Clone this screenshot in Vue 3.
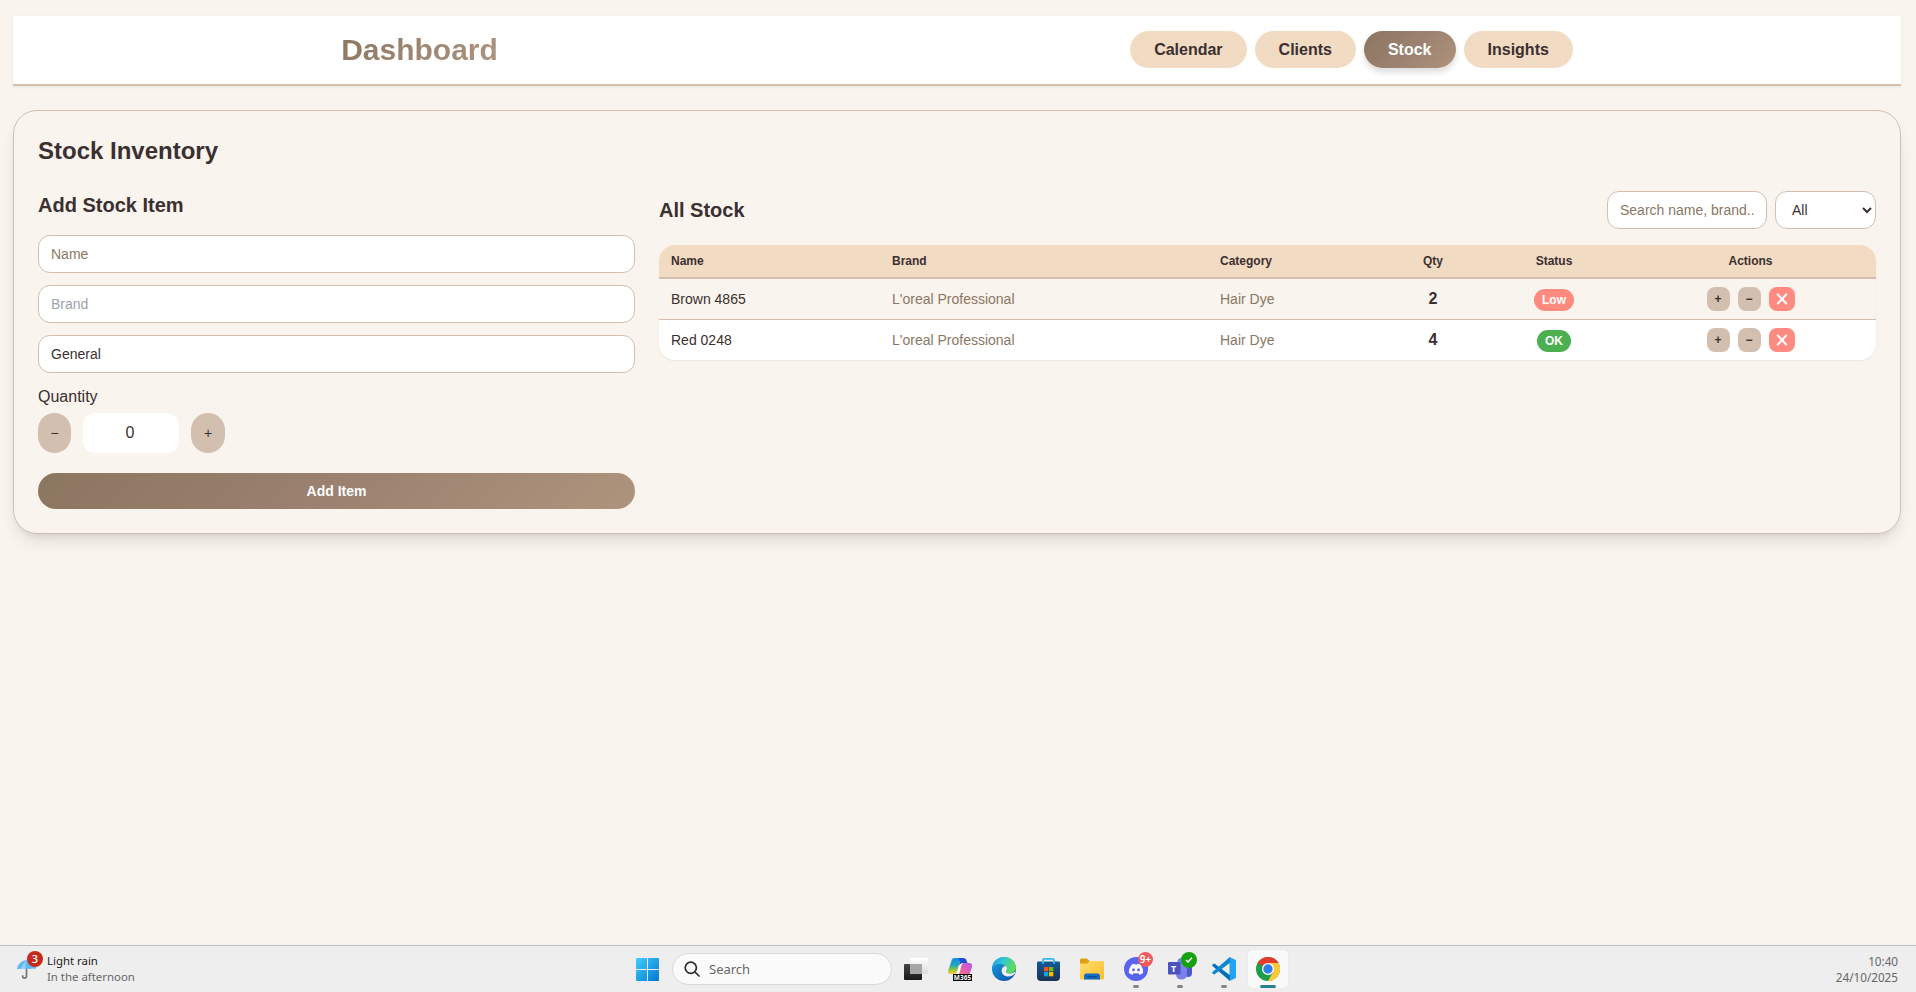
<script setup>
import { ref } from 'vue'

const tabs = ['Calendar', 'Clients', 'Stock', 'Insights']
const active = ref('Stock')
const items = ref([
  { name: 'Brown 4865', brand: "L'oreal Professional", category: 'Hair Dye', qty: 2 },
  { name: 'Red 0248', brand: "L'oreal Professional", category: 'Hair Dye', qty: 4 },
])
const category = ref('General')
const quantity = ref(0)
</script>

<template>
  <div class="screen">
    <main class="page">
      <header class="top">
        <h1>Dashboard</h1>
        <nav>
          <button v-for="t in tabs" :key="t" :class="['tab', { active: t === active }]" @click="active = t">{{ t }}</button>
        </nav>
      </header>

      <section class="panel">
        <h2>Stock Inventory</h2>
        <div class="columns">
          <form class="add" @submit.prevent>
            <h3>Add Stock Item</h3>
            <input class="field" placeholder="Name" />
            <input class="field cool" placeholder="Brand" />
            <input class="field" v-model="category" />
            <label>Quantity</label>
            <div class="stepper">
              <button class="round minus" type="button">−</button>
              <input class="count" v-model="quantity" />
              <button class="round" type="button">+</button>
            </div>
            <button class="submit">Add Item</button>
          </form>

          <div class="list">
            <div class="list-head">
              <h3>All Stock</h3>
              <div class="filters">
                <input class="field search" placeholder="Search name, brand..." />
                <select class="field pick"><option>All</option></select>
              </div>
            </div>
            <div class="table">
              <div class="row head">
                <span>Name</span><span>Brand</span><span>Category</span>
                <span class="mid">Qty</span><span class="mid">Status</span><span class="mid">Actions</span>
              </div>
              <div v-for="i in items" :key="i.name" :class="['row', { low: i.qty < 3 }]">
                <span>{{ i.name }}</span>
                <span class="muted">{{ i.brand }}</span>
                <span class="muted">{{ i.category }}</span>
                <span class="mid qty">{{ i.qty }}</span>
                <span class="mid"><b class="pill">{{ i.qty < 3 ? 'Low' : 'OK' }}</b></span>
                <span class="mid actions">
                  <button class="mini">+</button>
                  <button class="mini">−</button>
                  <button class="mini del">
                    <svg width="12" height="12" viewBox="0 0 12 12"><path d="M1.800 1.500 10.200 10.500M10.200 1.500 1.800 10.500" stroke="#fff" stroke-width="2" stroke-linecap="round" /></svg>
                  </button>
                </span>
              </div>
            </div>
          </div>
        </div>
      </section>
    </main>

    <footer class="taskbar">
      <div class="weather">
        <div class="umbrella">
          <svg width="24" height="22" viewBox="0 0 24 22">
            <path d="M10.5 9v9.2a1.9 1.9 0 0 1-3.8 0v-1" fill="none" stroke="#777" stroke-width="1.7" />
            <path d="M1 11C2 5 7 2 12 2s10 3 10 6l-1 -.5-1.500 3.500-3-.5-2.500.5-3-.5-2.500.5-3-.5-2.500.5z" fill="#62b5f5" />
            <path d="M5 11c1-4 3-7 6-8-1 2-2 4-1 8" fill="#8fd0ff" />
          </svg>
          <b class="alert">3</b>
        </div>
        <div class="weather-text"><p>Light rain</p><p class="sub">In the afternoon</p></div>
      </div>

      <div class="dock">
        <svg class="start" width="23" height="23" viewBox="0 0 23 23">
          <defs>
            <linearGradient id="win" x1="0" y1="0" x2="1" y2="1"><stop stop-color="#45cdfb" /><stop offset="1" stop-color="#0078d4" /></linearGradient>
            <mask id="panes"><rect width="23" height="23" rx="1" fill="#fff" /><path d="M11.5 0v23M0 11.5h23" stroke="#000" stroke-width="1" /></mask>
          </defs>
          <rect width="23" height="23" fill="url(#win)" mask="url(#panes)" />
        </svg>
        <div class="find">
          <svg width="16" height="16" viewBox="0 0 16 16" fill="none" stroke="#2b2b2b" stroke-width="1.7"><circle cx="6.8" cy="6.8" r="5.6" /><path d="m11 11 4 4" stroke-linecap="round" /></svg>
          <span>Search</span>
        </div>
        <div class="app">
          <svg width="24" height="24" viewBox="0 0 24 24">
            <defs>
              <linearGradient id="tv" x1="0" y1="0" x2="0" y2="1"><stop stop-color="#444" /><stop offset="1" stop-color="#191919" /></linearGradient>
              <linearGradient id="tw" x1="0" y1="0" x2="0" y2="1"><stop stop-color="#fff" /><stop offset="1" stop-color="#dcdcdc" /></linearGradient>
            </defs>
            <rect y="7" width="18" height="16" rx="1" fill="url(#tv)" /><rect x="6" y="1" width="18" height="16" rx="1" fill="url(#tw)" /><path d="M6 7h12v10H6z" fill="#a6a6a6" />
          </svg>
        </div>
        <div class="app">
          <svg width="24" height="24" viewBox="0 0 24 24">
            <defs>
              <linearGradient id="ca" x1="0" y1="0" x2="0" y2="1"><stop stop-color="#1689e8" /><stop offset=".45" stop-color="#20a8ba" /><stop offset=".75" stop-color="#9bc83c" /><stop offset="1" stop-color="#ffc928" /></linearGradient>
              <linearGradient id="cb" x1="1" y1="0" x2="0" y2="1"><stop stop-color="#a35bf2" /><stop offset=".5" stop-color="#e45cb4" /><stop offset="1" stop-color="#ff7d72" /></linearGradient>
            </defs>
            <path d="M6 1h9c-3 0-3 4-4 7l-2 7q-.7 2-3 2H2Q-.5 17 .3 13L3.800 3Q4.500 1 6 1z" fill="url(#ca)" />
            <path d="M10 1h5q3 0 3.500 2.500L19.500 6H15q-2 0-2.800 2Q11.500 9 11 8.500 13 3 10 1z" fill="#1d4fd0" />
            <path d="M11 8.500Q12 6.500 15 6l-3.500 10q-.7 2-2.500 2H6q2.300-.5 3-3z" fill="#fff" />
            <path d="M16 6h5q4 0 3 4l-2 6q-.5 2-2 2H9q2-.5 2.700-2.500L13.500 8q.8-2 2.500-2z" fill="url(#cb)" />
          </svg>
          <b class="m365">M365</b>
        </div>
        <div class="app">
          <svg width="24" height="24" viewBox="0 0 24 24">
            <defs>
              <linearGradient id="ea" x1="0" y1="0" x2="1" y2=".3"><stop stop-color="#1b9de2" /><stop offset=".5" stop-color="#33c5d7" /><stop offset="1" stop-color="#61dc55" /></linearGradient>
              <linearGradient id="eb" x1="0" y1="0" x2="1" y2="1"><stop stop-color="#1ba0e2" /><stop offset="1" stop-color="#0c4fa5" /></linearGradient>
            </defs>
            <circle cx="12" cy="12" r="12" fill="url(#eb)" />
            <path d="M0 11C1 4 6 0 12 0c7 0 12 5 12 10.500 0 3.500-3 6-6.500 6-2.500 0-4-1-3.500-2 1-1 1.200-2 1-3C14.500 8.500 11 7 7.500 7 4 7 1.500 8.500 0 11z" fill="url(#ea)" />
            <path d="M15 11c0 1.500-.5 2.500-1 3.200-.5 1.300 1 2.300 3.500 2.300 2 0 3.500-.5 4.800-1.500.6-.3 1.200 0 1 .6-1.500 3.200-5 4.400-8.400 3.900-4-.7-6-4-5-7.500.5-1.500 1.500-2.500 3-3 1.200.3 2.100 1 2.100 2z" fill="#eee" />
          </svg>
        </div>
        <div class="app">
          <svg width="23" height="24" viewBox="0 0 23 24">
            <defs><linearGradient id="bag" x1="0" y1="0" x2="0" y2="1"><stop stop-color="#135999" /><stop offset="1" stop-color="#1c3150" /></linearGradient></defs>
            <path d="M0 5.500q0-1 1-1h21q1 0 1 1V20q0 4-4 4H4q-4 0-4-4z" fill="url(#bag)" />
            <path d="M6 7V3q0-1.200 1.200-1.200h8.600Q17 1.800 17 3v4" fill="none" stroke="#36b8f5" stroke-width="1.700" />
            <path d="M7 10h4.300v4.300H7z" fill="#f25022" /><path d="M12 10h4.300v4.300H12z" fill="#7fba00" /><path d="M7 15h4.300v4.300H7z" fill="#00a4ef" /><path d="M12 15h4.300v4.300H12z" fill="#ffb900" />
          </svg>
        </div>
        <div class="app">
          <svg width="24" height="22" viewBox="0 0 24 22">
            <defs><linearGradient id="fold" x1="0" y1="0" x2="1" y2="1"><stop stop-color="#ffdf70" /><stop offset="1" stop-color="#fdbb2b" /></linearGradient></defs>
            <path d="M0 2q0-1.500 1.500-1.500H7L9.500 3H22q2 0 2 2v8H0z" fill="#dda012" />
            <path d="M0 5.500h7L9.500 3H22.500Q24 3 24 4.500V20q0 1.500-1.500 1.500h-21Q0 21.500 0 20z" fill="url(#fold)" />
            <path d="M4 21.500V18q0-2.500 2.500-2.500h11Q20 15.500 20 18v3.500z" fill="#0f6dc4" /><path d="M7 18.700h10" stroke="#074d91" stroke-width="1.400" />
          </svg>
        </div>
        <div class="app">
          <svg width="24" height="24" viewBox="0 0 24 24">
            <circle cx="12" cy="12" r="12" fill="#5865f2" />
            <path d="M8 7.500q1-.6 2.300-.8l.5.9h2.400l.5-.9q1.300.2 2.800.8 3 4 2.600 8.600-1.500 1.200-3.600 1.600l-.9-1.400H9.400l-.9 1.400Q6.400 17.300 4.900 16.100 4.500 11.500 8 7.500z" fill="#fff" />
            <ellipse cx="9.500" cy="12.800" rx="1.400" ry="1.600" fill="#5865f2" /><ellipse cx="14.500" cy="12.800" rx="1.400" ry="1.600" fill="#5865f2" />
          </svg>
          <b class="bubble red">9+</b><i class="dot"></i>
        </div>
        <div class="app">
          <svg width="24" height="24" viewBox="0 0 24 24">
            <circle cx="13.500" cy="5" r="4" fill="#7b83eb" /><path d="M17 9h6q1 0 1 1v6q0 4-4 4-2 0-3-1z" fill="#5059c9" />
            <path d="M8 9h10q1 0 1 1v7q0 5.500-5.500 5.500T8 17z" fill="#7b83eb" /><rect y="5" width="12.500" height="12.500" rx="1" fill="#4b53bc" />
          </svg>
          <b class="tee">T</b>
          <b class="bubble green"><svg width="8" height="8" viewBox="0 0 8 8"><path d="m1 4 2 2 4-4.300" fill="none" stroke="#fff" stroke-width="1.500" /></svg></b><i class="dot"></i>
        </div>
        <div class="app">
          <svg width="24" height="24" viewBox="0 0 24 24">
            <path d="M17.500 0 24 3v18l-6.500 3z" fill="#24a3f0" />
            <path d="M0 8.200 1.700 6.700q.5-.4 1 0L18 18.200V24L.2 8.800z" fill="#0070bb" />
            <path d="M0 15.800l1.700 1.500q.5.400 1 0L18 5.800V0L.2 15.200z" fill="#0c88d2" />
          </svg>
          <i class="dot"></i>
        </div>
        <div class="app current">
          <svg width="24" height="24" viewBox="0 0 24 24">
            <circle cx="12" cy="12" r="12" fill="#1e9e4c" />
            <path d="M12 12 1.600 6A12 12 0 0 1 22.400 6z" fill="#e33b2e" /><path d="M12 6h10.400A12 12 0 0 1 12 24l5.200-9z" fill="#fcc934" />
            <circle cx="12" cy="12" r="6" fill="#fff" /><circle cx="12" cy="12" r="4.700" fill="#2f7de9" />
          </svg>
          <i class="dot wide"></i>
        </div>
      </div>

      <div class="clock"><p>10:40</p><p>24/10/2025</p></div>
    </footer>
  </div>
</template>

<style>
body { margin: 0; background: #f9f4ed; }
</style>

<style scoped>
* { box-sizing: border-box; }
.screen { height: 992px; display: flex; flex-direction: column; overflow: hidden; background: #f9f4ed; color: #3b2f2f; font: 16px/24px "Liberation Sans", Arial, sans-serif; }
.page { flex: 1; padding: 16px 15px 0 13px; }
h1, h2, h3, p { margin: 0; }
button, input, select { font-family: inherit; color: inherit; border: 0; margin: 0; padding: 0; outline: none; }
.top { height: 70px; padding: 0 12px 1px; background: #fff; border-bottom: 2px solid #d2bfb0; box-shadow: 0 1px 3px rgba(0,0,0,.07); display: flex; align-items: center; justify-content: space-around; }
h1 { font-size: 30px; line-height: 36px; background: linear-gradient(135deg, #8b7660, #b09580); background-clip: text; color: transparent; }
nav { display: flex; gap: 8px; }
.tab { height: 37px; padding: 0 24px; border-radius: 19px; background: #f2dbc3; font-size: 16px; font-weight: 700; }
.tab.active { background: linear-gradient(135deg, #8b7660, #9c8170 50%, #ae947c); color: #fff; box-shadow: 0 4px 6px rgba(0,0,0,.14); }
.panel { height: 424px; margin-top: 24px; padding: 24px; border: 1px solid #d2bfb0; border-radius: 24px; box-shadow: 0 10px 15px -3px rgba(0,0,0,.1), 0 4px 6px -4px rgba(0,0,0,.1); }
h2 { font-size: 24px; line-height: 32px; }
h3 { font-size: 20px; line-height: 28px; }
.columns { display: grid; grid-template-columns: 597px 1217px; gap: 24px; margin-top: 24px; }
.add { display: flex; flex-direction: column; }
.add .field { margin-bottom: 12px; }
.add h3 { margin-bottom: 16px; }
.field { height: 38px; padding: 0 12px; border: 1px solid #d2bfb0; border-radius: 12px; background: #fff; font-size: 14px; }
.field::placeholder { color: #8b7765; opacity: 1; }
.cool::placeholder { color: #9ca3af; }
label { margin-bottom: 4px; }
.stepper { display: flex; gap: 12px; margin-bottom: 20px; }
.round { width: 34px; height: 40px; border-radius: 17px; background: #d2bfb0; font-size: 14px; }
.minus { width: 33px; }
.count { width: 96px; height: 40px; padding-right: 2px; border-radius: 12px; background: #fff; text-align: center; font-size: 16px; }
.submit { height: 36px; border-radius: 18px; background: linear-gradient(135deg, #8b7660, #9c8170 50%, #ae947c); color: #fff; font-size: 14px; font-weight: 700; }
.list-head { display: flex; align-items: center; justify-content: space-between; margin-bottom: 16px; }
.filters { display: flex; gap: 8px; }
.search { width: 160px; }
.pick { width: 101px; }
.table { border-radius: 16px; overflow: hidden; background: #fff; box-shadow: 0 1px 2px rgba(0,0,0,.06); font-size: 14px; }
.row { display: grid; grid-template-columns: 221px 328px 175px 100px 142px 251px; height: 40px; align-items: center; }
.row > span { padding: 0 12px; }
.row > .mid { text-align: center; padding: 0; }
.row.head { height: 34px; background: #f2dbc3; border-bottom: 2px solid #d2bfb0; font-size: 12px; font-weight: 700; }
.row.low { height: 41px; background: #f9f4ed; border-bottom: 1px solid #d2bfb0; }
.muted { color: #8b7765; }
.qty { font-size: 16px; font-weight: 700; }
.pill { display: inline-block; padding: 0 8px; height: 22px; line-height: 22px; border-radius: 11px; background: #4caf50; color: #fff; font-size: 12px; vertical-align: middle; }
.low .pill { background: #ff8a80; }
.row > .actions { display: flex; justify-content: center; gap: 8px; }
.mini { width: 23px; height: 24px; border-radius: 8px; background: #d2bfb0; font-size: 12px; font-weight: 700; }
.mini.del { width: 26px; background: #ff8a80; display: grid; place-items: center; }

.taskbar { height: 47px; border-top: 1px solid #bdbdbd; background: #eee; display: grid; grid-template-columns: 1fr auto 1fr; font: 12px/16px "Noto Sans", sans-serif; color: #1b1b1b; }
.weather { display: flex; padding-left: 16px; }
.umbrella { position: relative; width: 31px; padding-top: 12px; }
.alert { position: absolute; left: 11px; top: 5px; width: 16px; height: 16px; border-radius: 50%; background: #c42b1c; color: #fff; font-size: 11px; font-weight: 500; text-align: center; }
.weather-text { padding-top: 7px; font-size: 11.400px; }
.sub, .clock { color: #666; }
.dock { display: flex; align-items: center; padding-left: 8px; }
.start { margin-right: 13px; }
.find { width: 220px; height: 32px; margin-right: 4px; padding-left: 11px; border: 1px solid #d9d9d9; border-radius: 16px; background: #fafafa; display: flex; align-items: center; gap: 9px; font-size: 13px; color: #666; }
.app { position: relative; width: 40px; height: 38px; margin-right: 4px; display: grid; place-items: center; border-radius: 4px; }
.current { background: #f9f9f9; margin-right: 0; box-shadow: 0 0 1px rgba(0,0,0,.15); }
.m365 { position: absolute; left: 13px; top: 24px; width: 19px; height: 7px; background: #000; color: #fff; font-size: 6.500px; line-height: 7px; text-align: center; }
.bubble { position: absolute; left: 22px; top: 2px; width: 15px; height: 15px; border-radius: 50%; display: grid; place-items: center; color: #fff; font-size: 10px; line-height: 15px; font-weight: 600; }
.red { background: #ed5b5b; }
.green { left: 21px; width: 16px; height: 16px; background: #13a10e; }
.tee { position: absolute; left: 11px; top: 12px; color: #fff; font-size: 9px; line-height: 13px; }
.dot { position: absolute; bottom: 0; left: 17px; width: 6px; height: 3px; border-radius: 2px; background: #858585; }
.wide { left: 12px; width: 16px; background: #26808f; }
.clock { padding: 7px 18px 0 0; text-align: right; font-size: 11.700px; }
</style>
